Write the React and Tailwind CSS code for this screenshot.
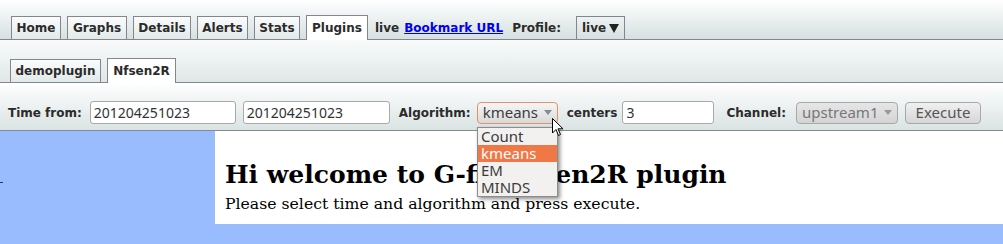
import React from 'react'

const TABS = [
  { label: 'Home', w: 'w-[50px]' },
  { label: 'Graphs', w: 'w-[60px]' },
  { label: 'Details', w: 'w-[58px]' },
  { label: 'Alerts', w: 'w-[51px]' },
  { label: 'Stats', w: 'w-[46px]' },
]

const sans = "font-['DejaVu_Sans',sans-serif]"
const ui = "font-['Noto_Sans','Open_Sans',sans-serif]"

function Tab({ label, w, active }) {
  return (
    <div
      className={
        'flex items-center justify-center border border-b-0 border-[#85858f] text-[12px] font-bold text-[#2b2b2b] ' +
        w +
        (active
          ? ' h-[25px] -mb-px bg-white'
          : ' h-[23px] bg-gradient-to-b from-[#fbfcfc] to-[#e2e9e9]')
      }
    >
      {label}
    </div>
  )
}

function Arrow({ color = '#8a8a8a' }) {
  return (
    <svg width="8" height="5" viewBox="0 0 8 5">
      <path d="M0 0 L8 0 L4 5 Z" fill={color} />
    </svg>
  )
}

export default function App() {
  return (
    <div className={'relative w-[1003px] h-[244px] overflow-hidden bg-[#99bbff] ' + sans}>
      {/* Top tabs */}
      <div className="h-[40px] flex items-end pl-[11px] border-b border-[#85858f] bg-gradient-to-b from-white to-[#d6e0e0]">
        <div className="flex items-end gap-[6px]">
          {TABS.map(t => <Tab key={t.label} {...t} />)}
          <Tab label="Plugins" w="w-[62px]" active />
        </div>
        <div className="h-[23px] flex items-center text-[12px] font-bold text-[#2b2b2b]">
          <span className="ml-[7px]">live</span>
          <span className="ml-[5px] text-[#0000ee] underline">Bookmark URL</span>
          <span className="ml-[9px]">Profile:</span>
        </div>
        <div className="ml-[15px] h-[23px] w-[49px] flex items-center justify-center gap-[3px] border border-b-0 border-[#85858f] text-[12px] font-bold text-[#2b2b2b]">
          live
          <svg width="10" height="9" viewBox="0 0 10 9"><path d="M0 0 L10 0 L5 9 Z" fill="#222" /></svg>
        </div>
      </div>

      {/* Plugin sub tabs */}
      <div className="h-[43px] flex items-end gap-[6px] pl-[10px] border-b border-[#85858f] bg-gradient-to-b from-[#f9fbfb] to-[#dfe7e7]">
        <Tab label="demoplugin" w="w-[91px]" />
        <Tab label="Nfsen2R" w="w-[69px]" active />
      </div>

      {/* Toolbar */}
      <div className="h-[48px] flex items-center pl-[8px] pt-[12px] border-b border-[#8a8a8a] bg-gradient-to-b from-white to-[#dae3e3] text-[12px] font-bold text-[#2b2b2b]">
        <span>Time from:</span>
        <div className={'ml-[8px] h-[23px] w-[146px] flex items-center pl-[3px] bg-white border border-[#a9a9a9] rounded-[3px] text-[14px] font-normal text-[#333] ' + ui}>201204251023</div>
        <div className={'ml-[7px] h-[23px] w-[147px] flex items-center pl-[3px] bg-white border border-[#a9a9a9] rounded-[3px] text-[14px] font-normal text-[#333] ' + ui}>201204251023</div>
        <span className="ml-[9px]">Algorithm:</span>
        <div className={'ml-[6px] h-[22px] w-[81px] flex items-center justify-between px-[5px] border border-[#e8906c] rounded-[4px] bg-gradient-to-b from-[#f6f6f6] to-[#d9d9d9] text-[15px] font-normal text-[#3c3c3c] ' + ui}>
          kmeans
          <Arrow />
        </div>
        <span className="ml-[9px]">centers</span>
        <div className={'ml-[5px] h-[23px] w-[92px] flex items-center pl-[3px] bg-white border border-[#a9a9a9] rounded-[3px] text-[14px] font-normal text-[#333] ' + ui}>3</div>
        <span className="ml-[12px]">Channel:</span>
        <div className={'ml-[10px] h-[22px] w-[102px] flex items-center justify-between px-[5px] border border-[#a8a8a8] rounded-[4px] bg-gradient-to-b from-[#e6e6e6] to-[#d4d4d4] text-[15px] font-normal text-[#777] ' + ui}>
          upstream1
          <Arrow color="#999" />
        </div>
        <div className={'ml-[7px] h-[22px] w-[76px] flex items-center justify-center border border-[#a8a8a8] rounded-[4px] bg-gradient-to-b from-[#f0f0f0] to-[#d6d6d6] text-[15px] font-normal text-[#555] ' + ui}>
          Execute
        </div>
      </div>

      {/* Content */}
      <div className="flex">
        <div className="w-[215px] pt-[51px]">
          <div className="w-[3px] h-px bg-[#334]" />
        </div>
        <div className="flex-1 h-[93px] bg-white pl-[10px] pt-[30px] font-['DejaVu_Serif',serif] text-black">
          <h1 className="text-[25px] font-bold leading-[28px]">Hi welcome to G-fix Nfsen2R plugin</h1>
          <p className="text-[15.7px] leading-[20px] mt-[5px]">Please select time and algorithm and press execute.</p>
        </div>
      </div>

      {/* Open select list */}
      <div className={'absolute left-[477px] top-[127px] w-[81px] bg-[#f2f1f0] border border-[#8c8c8c] shadow-[2px_2px_4px_rgba(0,0,0,0.45)] text-[15px] leading-[17px] text-[#3c3c3c] ' + ui}>
        <div className="px-[3px]">Count</div>
        <div className="px-[3px] bg-[#f07746] text-white">kmeans</div>
        <div className="px-[3px]">EM</div>
        <div className="px-[3px]">MINDS</div>
      </div>

      {/* Mouse pointer */}
      <svg className="absolute left-[552px] top-[118px]" width="12" height="19" viewBox="0 0 12 19">
        <path d="M0.5 0.5 L0.5 15 L4 11.5 L6.5 17.5 L8.5 16.5 L6 10.8 L11 10.8 Z" fill="#fff" stroke="#000" strokeWidth="1" strokeLinejoin="round" />
      </svg>
    </div>
  )
}
